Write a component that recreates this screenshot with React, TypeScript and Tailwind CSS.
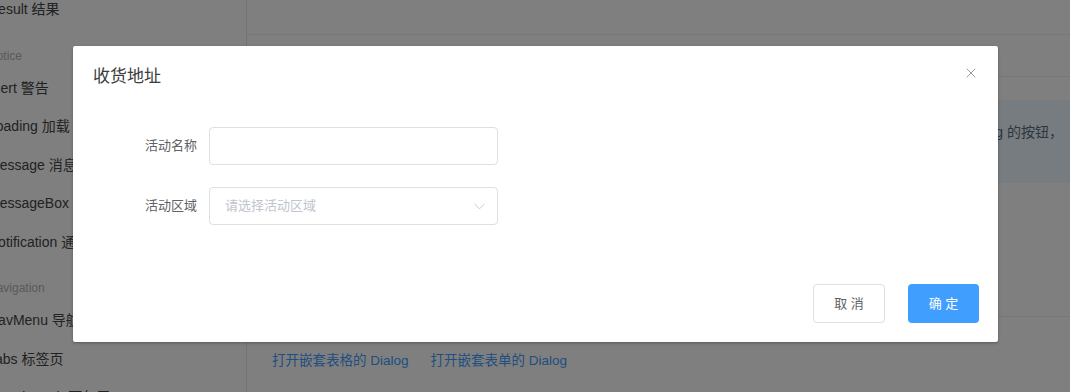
import { ChevronDown, X } from "lucide-react";

const font = { fontFamily: '"Liberation Sans", "Noto Sans CJK SC", sans-serif' };

type NavEntry = { kind: "group" | "item"; label: string };

const nav: NavEntry[] = [
  { kind: "item", label: "Result 结果" },
  { kind: "group", label: "Notice" },
  { kind: "item", label: "Alert 警告" },
  { kind: "item", label: "Loading 加载" },
  { kind: "item", label: "Message 消息提示" },
  { kind: "item", label: "MessageBox 弹框" },
  { kind: "item", label: "Notification 通知" },
  { kind: "group", label: "Navigation" },
  { kind: "item", label: "NavMenu 导航菜单" },
  { kind: "item", label: "Tabs 标签页" },
  { kind: "item", label: "Breadcrumb 面包屑" },
];

// the docs sidebar is scrolled a little to the left, so its labels are clipped
function Sidebar() {
  return (
    <aside className="w-[247px] shrink-0 border-r border-[#e4e7ee] overflow-hidden">
      <ul className="-ml-[12px] -mt-[10px] flex flex-col">
        {nav.map((n) =>
          n.kind === "group" ? (
            <li key={n.label} className="h-[40px] pt-[19px] text-[12px] leading-[16px] text-[#b4b4b4] whitespace-nowrap">
              {n.label}
            </li>
          ) : (
            <li key={n.label} className="h-[38.5px] leading-[38.5px] text-[14px] text-[#444] whitespace-nowrap">
              {n.label}
            </li>
          )
        )}
      </ul>
    </aside>
  );
}

function MainArea() {
  return (
    <main className="flex-1 flex flex-col min-w-0">
      <div className="h-[35px] border-b border-[#eaeefb] shrink-0" />
      <div className="h-[42px] border-b border-[#eaeefb] shrink-0" />
      <div className="mt-[23px] h-[83px] bg-[#ecf8ff] shrink-0 flex items-start justify-end pr-[7px] pt-[22px] text-[14px] text-[#5e6d82] whitespace-nowrap overflow-hidden">
        点击下方用于打开嵌套层级 Dialog 的按钮，
      </div>
      <div className="h-[134px] border-b border-[#eaeefb] shrink-0" />
      <div className="flex gap-[22px] pl-[25px] pt-[34px] text-[13.5px] leading-[20px] text-[#409eff]">
        <span>打开嵌套表格的 Dialog</span>
        <span>打开嵌套表单的 Dialog</span>
      </div>
    </main>
  );
}

function Field({ label, children }: { label: string; children: React.ReactNode }) {
  return (
    <div className="flex items-center">
      <label className="w-[116px] pr-[12px] text-right text-[13px] text-[#606266]">{label}</label>
      {children}
    </div>
  );
}

function AddressDialog() {
  return (
    <div className="absolute left-[73px] top-[46px] w-[925px] h-[296px] bg-white rounded-[2px] shadow-[0_1px_3px_rgba(0,0,0,0.3)] flex flex-col">
      <div className="flex items-center justify-between pt-[19px] pl-[20px] pr-[19px]">
        <span className="text-[17px] leading-[24px] text-[#3a3b3d]">收货地址</span>
        <X className="w-[16px] h-[16px] text-[#909399] -mt-[8px]" strokeWidth={1.4} />
      </div>
      <div className="mt-[38px] pl-[20px] flex flex-col gap-[22px]">
        <Field label="活动名称">
          <div className="w-[289px] h-[38px] rounded-[4px] border border-[#dcdfe6]" />
        </Field>
        <Field label="活动区域">
          <div className="w-[289px] h-[38px] rounded-[4px] border border-[#dcdfe6] flex items-center justify-between pl-[15px] pr-[8px]">
            <span className="text-[13px] text-[#c0c4cc]">请选择活动区域</span>
            <ChevronDown className="w-[19px] h-[19px] text-[#c0c4cc]" strokeWidth={1.1} />
          </div>
        </Field>
      </div>
      <div className="mt-auto flex justify-end gap-[23px] pr-[19px] pb-[19px]">
        <button className="w-[72px] h-[39px] rounded-[4px] border border-[#dcdfe6] bg-white text-[13px] text-[#606266]">
          取 消
        </button>
        <button className="w-[71px] h-[39px] rounded-[4px] bg-[#409eff] text-[13px] text-white">
          确 定
        </button>
      </div>
    </div>
  );
}

export default function App() {
  return (
    <div className="relative w-full h-[392px] overflow-hidden bg-white" style={font}>
      <div className="flex h-full">
        <Sidebar />
        <MainArea />
      </div>
      <div className="absolute inset-0 bg-black/50" />
      <AddressDialog />
    </div>
  );
}
